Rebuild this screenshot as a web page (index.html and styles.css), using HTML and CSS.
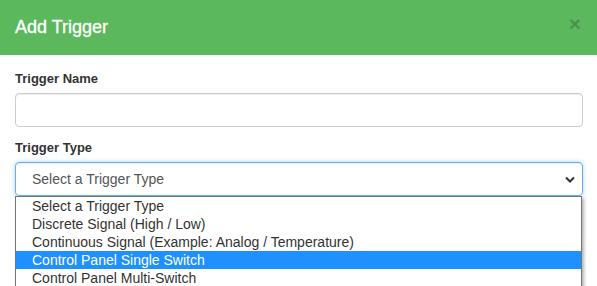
FILE: index.html
```html
<!DOCTYPE html>
<html lang="en">
<head>
  <meta charset="UTF-8" />
  <meta name="viewport" content="width=device-width, initial-scale=1.0"/>
  <title>Add Trigger</title>
  <link rel="stylesheet" href="styles.css">
</head>
<body>

  <div class="modal">
    <div class="modal-header">
      <h4 class="modal-title">Add Trigger</h4>
      <button type="button" class="close">&times;</button>
    </div>

    <div class="modal-body">
      <div class="form-group">
        <label>Trigger Name</label>
        <input type="text" class="form-control" name="trigger_name">
      </div>

      <div class="form-group type-group">
        <label>Trigger Type</label>
        <div class="select-box">
          <span>Select a Trigger Type</span>
          <svg class="chevron" width="10" height="7" viewBox="0 0 10 7">
            <polyline points="1,1.5 5,5.5 9,1.5" fill="none" stroke="#333" stroke-width="2"/>
          </svg>
        </div>

        <ul class="dropdown">
          <li>Select a Trigger Type</li>
          <li>Discrete Signal (High / Low)</li>
          <li>Continuous Signal (Example: Analog / Temperature)</li>
          <li class="active">Control Panel Single Switch</li>
          <li>Control Panel Multi-Switch</li>
        </ul>
      </div>
    </div>
  </div>

</body>
</html>
```

FILE: styles.css
```css
* {
  box-sizing: border-box;
  font-family: 'Liberation Sans', Arial, sans-serif;
}

html, body {
  height: 100%;
}

body {
  margin: 0;
  background: white;
  overflow: hidden;
}

.modal-header {
  background: #5cb85c;
  height: 55px;
  padding: 15px 16px 15px 15px;
  display: flex;
  align-items: flex-start;
  justify-content: space-between;
}

.modal-title {
  margin: 0;
  font-size: 18px;
  font-weight: normal;
  line-height: 25px;
  color: white;
  -webkit-text-stroke: 0.3px white;
}

.close {
  background: none;
  border: none;
  padding: 0;
  margin-top: -2px;
  font-size: 21px;
  font-weight: bold;
  line-height: 1;
  color: black;
  opacity: 0.2;
  cursor: pointer;
}

.modal-body {
  padding: 15px 14px 0 15px;
}

.form-group {
  margin-bottom: 12px;
}

label {
  display: block;
  font-size: 13px;
  font-weight: bold;
  line-height: 18px;
  color: #333;
  margin-bottom: 5px;
}

.form-control {
  display: block;
  width: 100%;
  height: 34px;
  padding: 6px 16px;
  font-size: 14px;
  color: #555;
  border: 1px solid #ccc;
  border-radius: 4px;
  box-shadow: inset 0 1px 1px rgba(0,0,0,0.075);
}

.type-group {
  position: relative;
}

.select-box {
  height: 34px;
  display: flex;
  align-items: center;
  justify-content: space-between;
  padding: 0 7px 0 16px;
  font-size: 14px;
  color: #555;
  border: 1px solid #66afe9;
  border-radius: 4px;
  box-shadow: inset 0 1px 1px rgba(0,0,0,0.075), 0 0 4px rgba(102,175,233,0.6);
}

.chevron {
  display: block;
  margin-top: 1px;
}

.dropdown {
  position: absolute;
  left: 0;
  right: 1px;
  top: 57px;
  margin: 0;
  padding: 0;
  list-style: none;
  background: white;
  border: 1px solid #767676;
  box-shadow: 2px 2px 3px rgba(0,0,0,0.3);
}

.dropdown li {
  height: 18px;
  line-height: 18px;
  padding-left: 16px;
  font-size: 14px;
  color: #333;
  white-space: nowrap;
}

.dropdown li.active {
  background: #1e90ff;
  color: white;
}
```
